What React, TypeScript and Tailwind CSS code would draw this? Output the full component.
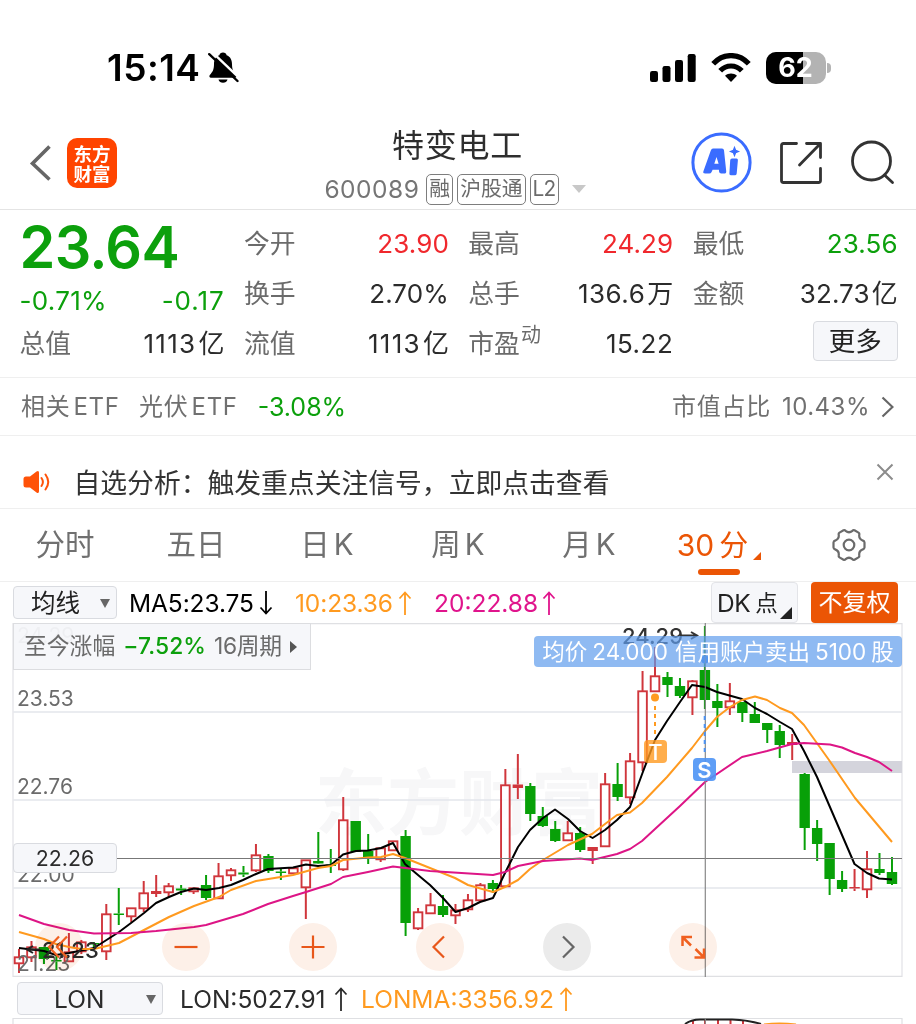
import type { ReactNode } from "react";

type Tone = "up" | "down" | "flat";

const TONE: Record<Tone, string> = {
  up: "text-[#f0282d]",
  down: "text-[#0ca00c]",
  flat: "text-[#2b2b2b]",
};

const RED = "#d0363c";
const GREEN = "#08a008";

// [kind, high, bodyTop, bodyBottom, low] in chart pixels
// r = hollow red, R = solid red, g = solid green
type Candle = ["r" | "R" | "g", number, number, number, number];

const CANDLES: Candle[] = [
  ["r", 949, 957, 963, 973], ["r", 941, 947, 957, 962], ["g", 947, 947, 959, 964], ["g", 955, 960, 961.5, 970],
  ["r", 933, 952, 961, 962], ["r", 940, 942, 951, 954], ["g", 942, 943, 944.5, 947], ["r", 904, 914, 951, 960],
  ["g", 888, 913.5, 915, 925], ["r", 908, 908, 916, 922], ["r", 881, 893, 908, 912], ["R", 875, 891, 894, 897],
  ["r", 883, 886, 892, 897], ["g", 885, 888.5, 890.5, 895], ["r", 888, 888, 891, 894], ["g", 875, 885, 898, 900],
  ["r", 863, 876, 898, 898], ["r", 868, 870, 875, 881], ["g", 866, 872.5, 874.5, 877], ["r", 844, 855, 870, 872],
  ["g", 854, 856, 871, 873], ["g", 868, 871.5, 873, 880], ["r", 868, 868, 873, 873], ["r", 860, 860, 887, 919],
  ["g", 832, 861, 863.5, 864], ["g", 849, 864.5, 866, 873], ["r", 797, 820, 869, 871], ["g", 821, 821, 852, 852],
  ["g", 834, 851, 857, 864], ["r", 848, 848, 859, 862], ["r", 841, 841, 850, 850], ["g", 830, 836, 923, 936],
  ["r", 908, 912, 928, 930], ["r", 893, 905, 913, 913], ["g", 895, 906, 915, 917], ["r", 904, 910, 915, 924],
  ["r", 894, 900, 909, 912], ["r", 883, 885, 900, 900], ["g", 880, 883, 889, 893], ["r", 769, 785, 886, 886],
  ["R", 754, 784.5, 788, 799], ["g", 783, 786, 814, 821], ["g", 807, 816, 826, 827], ["g", 821, 829, 841, 842],
  ["r", 821, 833, 840, 840], ["g", 827, 833, 850, 852], ["R", 847, 847, 851, 864], ["r", 773, 784, 846, 846],
  ["g", 763, 784, 797, 801], ["r", 753, 761, 797, 804], ["r", 671, 691, 762, 771], ["r", 647, 676, 691, 691],
  ["g", 672, 677, 685, 697], ["g", 678, 686, 696, 698], ["r", 680, 681, 697, 715], ["g", 626, 670, 700, 709],
  ["g", 684, 701, 708, 727], ["r", 683, 701, 707, 715], ["g", 702, 702, 713, 722], ["g", 702, 714, 723, 723],
  ["g", 723, 723, 730, 743], ["g", 725, 731, 745, 758], ["R", 734, 742, 745, 760], ["g", 773, 774, 828, 850],
  ["g", 820, 828, 844, 861], ["g", 843, 843, 879, 895], ["g", 871, 880, 889, 892], ["R", 869, 887, 888.5, 891],
  ["r", 851, 869, 889, 898], ["g", 853, 869, 873, 875], ["g", 857, 872, 884, 885],
];

const MA5 =
  "19,948 44,951 56,955 69,953 94,948 119,932 131,923 144,913 156,903 169,897 181,892 194,888.5 206,890 219,888 231,885 243,880 256,874 268,869 293,867.5 306,864.5 318,866 331,865 343,854.5 356,851 368,850.5 381,848 393,843 405,864 418,875 430,885 443,898 455.5,912 468,908 480,902 493,898 505,873 518,847 530,830 543,818 555,809.5 568,819 580,831 592.6,838 605,830 617,820 630,807 642.5,773 655,740 667,721 680,702 692,685 705,687 717,692 742,699 755,708 767,714 780,722 792,729 804,751 817,777 829.5,806 842,835 854.5,864 867,873 879,878.5 892,879.5";
const MA10 =
  "19,932 44,939 56,944 69,947 81,949 94,949 119,943 144,930 169,917 194,906 219,897 231,890 256,881 293,875 318,868 331,866 343,860 368,857.5 381,857 393,854 405,858 430,868 455,878 468,885 493,892 505,887 518,880 530,869 543,860 568,845 592,834 605,824 617,815 630,812.5 642,803 667,777 692,748 705,731 717,717 730,707 742,700 755,696.5 767,700 780,708 792,713 804,725 829,760 855,798 892,842";
const MA20 =
  "19,915 44,924 69,930 94,933.5 131,933 156,931 194,927 206,925 243,914 268,904 293,896 306,892 331,884 343,877 368,872 393,866.5 430,871 493,875 505,872 518,866 543,861 580,858.5 592,860 617,854 630,849 642,841 655,829 680,806 705,782 742,757 767,751 792,744 804,743 830,744.5 842,747.5 855,753 867,757 879,762 892,771";

const SANS = "font-['Inter','Noto_Sans_CJK_SC',sans-serif]";

function StatusBar() {
  return (
    <div className="flex h-[108px] items-center justify-between pl-[107px] pr-[85px] pt-[27px]">
      <div className="flex items-center gap-[7px]">
        <span className="text-[37px] font-semibold leading-none tracking-[0.500px] text-black">15:14</span>
        <svg width="32" height="34" viewBox="0 0 32 34">
          <path
            d="M15 1.500c-2 0-3.300 1.100-3.600 2.700C7.500 5.600 6 9 6 13c0 6-1.500 8-4.200 11-.9 1.200-.4 2.800 1.200 2.800h24c1.600 0 2.100-1.600 1.200-2.800C25.500 21 24 19 24 13c0-4-1.500-7.400-5.400-8.800C18.300 2.600 17 1.500 15 1.500z"
            fill="#000"
          />
          <path d="M10.500 28.500h9c-.6 2.200-2.300 3.300-4.500 3.300s-3.900-1.100-4.500-3.300z" fill="#000" />
          <path d="M2.800-.2 33 28.500" stroke="#fff" strokeWidth="2.400" />
          <path d="M1.200 3.200 29.500 30" stroke="#000" strokeWidth="2.400" strokeLinecap="round" />
        </svg>
      </div>
      <div className="flex items-center">
        <svg width="46" height="30" viewBox="0 0 46 30" className="mr-[15px]">
          <rect x="0" y="18" width="8" height="11" rx="2.200" />
          <rect x="12.500" y="13" width="8" height="16" rx="2.200" />
          <rect x="25" y="7" width="8" height="22" rx="2.200" />
          <rect x="37.700" y="1" width="8" height="28" rx="2.200" />
        </svg>
        <svg width="40" height="30" viewBox="0 0 40 30" className="mr-[15px]">
          <path d="M2.200 10.800C12-.2 28-.2 37.800 10.800" fill="none" stroke="#000" strokeWidth="5.200" />
          <path d="M9.200 17.800c6-6.400 15.600-6.400 21.600 0" fill="none" stroke="#000" strokeWidth="5.200" />
          <path d="M20 29l-6-6.200c3.300-3.200 8.700-3.200 12 0z" fill="#000" />
        </svg>
        <div className="relative flex h-[32px] w-[60px] items-center justify-center overflow-hidden rounded-[10px] bg-[#b3b3b3]">
          <div className="absolute inset-y-0 left-0 w-[37px] bg-black" />
          <span className="relative text-[27px] font-bold leading-none text-white">62</span>
        </div>
        <div className="ml-[1.500px] h-[10px] w-[4px] rounded-r-full bg-[#b3b3b3]" />
      </div>
    </div>
  );
}

function Badge({ children }: { children: ReactNode }) {
  return (
    <span className="flex h-[31px] items-center rounded-[5px] border-[1.500px] border-[#7d7d7d] px-[2px] text-[20.800px] leading-none text-[#6b6b6b]">
      {children}
    </span>
  );
}

function Header() {
  return (
    <header className="flex h-[102px] justify-between border-b border-[#e4e4e4] pl-[29px] pr-[21px]">
      <div className="flex h-[109px] w-[196px] items-center">
        <svg width="24" height="38" viewBox="0 0 24 38" className="mr-[14px]">
          <path d="M20.500 2.500 3.500 19.500l17 16" fill="none" stroke="#666" strokeWidth="3.600" />
        </svg>
        <div className="flex h-[50px] w-[50px] flex-col items-center justify-center rounded-[10px] bg-[#ff4400] font-['Noto_Sans_CJK_SC',sans-serif] text-[18.500px] font-bold leading-[20px] text-white">
          <span>东方</span>
          <span>财富</span>
        </div>
      </div>
      <div className="flex flex-col items-center">
        <h1 className="mt-[15px] pr-[1px] text-[32px] leading-[46px] tracking-[0.700px] text-[#2e2e2e]">特变电工</h1>
        <div className="-ml-[6px] flex items-center gap-[4px]">
          <span className="mr-[3px] text-[24.500px] leading-[40px] tracking-[0.500px] text-[#757575]">600089</span>
          <Badge>融</Badge>
          <Badge>沪股通</Badge>
          <Badge>
            <span className="tracking-[-0.700px]">L2</span>
          </Badge>
          <svg width="14" height="8" viewBox="0 0 14 8" className="ml-[9px]">
            <path d="M0 0h14L7 8z" fill="#c8c8c8" />
          </svg>
        </div>
      </div>
      <div className="flex h-[109px] items-center gap-[27px]">
        <svg width="61" height="61" viewBox="0 0 61 61">
          <circle cx="30.500" cy="30.500" r="28.600" fill="none" stroke="#3a6cff" strokeWidth="3" />
          <path
            d="M22.500 16.500h8.500q1.700 0 2 1.700L35.200 39q.3 2.600-2.200 2.600h-2.800q-1.900 0-2.100-1.800l-.2-2.100h-6.300l-1 2.300q-.7 1.600-2.400 1.600h-4q-2.700 0-1.700-2.500l7.300-20.700q.7-1.900 2.200-1.900zm3 8.500-2.200 6.800h4.300z"
            fill="#3a6cff"
          />
          <path d="M41 26.500h4.500q1.600 0 1.400 1.700L45.700 41.400q-.2 1.900-2 1.900h-3.900q-1.600 0-1.400-1.800l.8-13.300q.2-1.700 1.800-1.700z" fill="#3a6cff" />
          <path d="M43.500 15.500l1.100 2.800 2.900 1.200-2.900 1.200-1.100 2.800-1.100-2.800-2.900-1.200 2.900-1.200z" fill="#3a6cff" stroke="#3a6cff" strokeWidth="1.200" />
        </svg>
        <svg width="44" height="44" viewBox="0 0 44 44" fill="none" stroke="#333" strokeWidth="2.800" strokeLinejoin="round">
          <path d="M17.500 2.500H4.500q-2 0-2 2v35q0 2 2 2h35q2 0 2-2V27.500" strokeLinecap="round" />
          <path d="M27.500 2.500h14v14M41 3 20.500 24" strokeLinecap="round" />
        </svg>
        <svg width="45" height="45" viewBox="0 0 45 45" fill="none" stroke="#333" strokeWidth="2.800" strokeLinecap="round">
          <circle cx="21.500" cy="21" r="19" />
          <path d="m34.500 35 8 7.500" />
        </svg>
      </div>
    </header>
  );
}

function Stat({ label, sup, value, tone = "flat" }: { label: string; sup?: string; value: string; tone?: Tone }) {
  const unit = /[亿万]$/.test(value) ? value.slice(-1) : "";
  const num = unit ? value.slice(0, -1) : value;
  // Inter's "1" is narrow, open those numbers up a little
  const spacing = num === "1113" ? "tracking-[1.300px]" : num.startsWith("1") ? "tracking-[0.500px]" : "tracking-[0.100px]";
  return (
    <div className="flex h-[50px] items-center justify-between text-[26px] leading-none">
      <span className="flex text-[25.800px] text-[#6b6b6b]">
        {label}
        {sup && <span className="-mt-[6px] ml-[1px] text-[20px]">{sup}</span>}
      </span>
      <span className={`flex items-center gap-[2px] ${TONE[tone]}`}>
        <span className={spacing}>{num}</span>
        {unit && <span className="text-[26px]">{unit}</span>}
      </span>
    </div>
  );
}

function Quote() {
  return (
    <section className="grid h-[168px] grid-cols-[205px_205px_205px_205px] gap-x-[19.400px] border-b border-[#efefef] pl-[19.500px] pt-[9px]">
      <div>
        <div className="flex h-[57px] items-center text-[57.500px] font-semibold leading-none tracking-[-0.700px] text-[#0ca00c]">23.64</div>
        <div className="flex h-[50px] items-center justify-between text-[26px] leading-none tracking-[0.300px] text-[#0ca00c]">
          <span>-0.71%</span>
          <span className="tracking-[0.900px]">-0.17</span>
        </div>
        <div className="-mt-[7px]">
          <Stat label="总值" value="1113亿" />
        </div>
      </div>
      <div>
        <Stat label="今开" value="23.90" tone="up" />
        <Stat label="换手" value="2.70%" />
        <Stat label="流值" value="1113亿" />
      </div>
      <div>
        <Stat label="最高" value="24.29" tone="up" />
        <Stat label="总手" value="136.6万" />
        <Stat label="市盈" sup="动" value="15.22" />
      </div>
      <div>
        <Stat label="最低" value="23.56" tone="down" />
        <Stat label="金额" value="32.73亿" />
        <div className="flex justify-end pt-[2px]">
          <button className="flex h-[40px] w-[85px] items-center justify-center rounded-[4px] border border-[#d9dbe0] bg-[#f6f7fa] text-[26.500px] leading-none text-[#222]">
            更多
          </button>
        </div>
      </div>
    </section>
  );
}

function EtfRow() {
  return (
    <section className="flex h-[58px] items-center justify-between border-b border-[#efefef] pl-[21px] pr-[22px] pt-[1px] text-[24px] leading-none tracking-[0.700px] text-[#707070]">
      <div className="flex items-center">
        <span>相关</span>
        <span className="ml-[3px]">ETF</span>
        <span className="ml-[19.500px]">光伏</span>
        <span className="ml-[3px]">ETF</span>
        <span className="ml-[20px] text-[25px] tracking-[0] text-[#0ca00c]">-3.08%</span>
      </div>
      <div className="flex items-center">
        <span>市值占比</span>
        <span className="ml-[11px] tracking-[0.500px]">10.43%</span>
        <svg width="13" height="22" viewBox="0 0 13 22" className="ml-[11px]">
          <path d="M1.500 1.500 11.500 11l-10 9.500" fill="none" stroke="#666" strokeWidth="2.200" />
        </svg>
      </div>
    </section>
  );
}

function Notice() {
  return (
    <section className="flex h-[73px] items-center border-b border-[#efefef] pl-[23px] pr-[22px]">
      <svg width="28" height="24" viewBox="0 0 28 24" className="mt-[20px]">
        <path d="M3 6.500h4L13.500 1.500q2.500-1.500 2.500 1.300v18.400q0 2.800-2.500 1.300L7 17.500H3q-2.500 0-2.500-2.500V9Q.5 6.500 3 6.500z" fill="#ff5208" />
        <path d="M18.500 8q2.800 4 0 8M22.500 4.500q5.500 7.500 0 15" fill="none" stroke="#ff5208" strokeWidth="2" strokeLinecap="round" />
      </svg>
      <p className="ml-[22.500px] mt-[23px] text-[26.800px] leading-none text-[#333]">自选分析：触发重点关注信号，立即点击查看</p>
      <svg width="18" height="18" viewBox="0 0 18 18" className="ml-auto">
        <path d="m1.500 1.500 15 15m0-15-15 15" stroke="#8c8c8c" strokeWidth="2" />
      </svg>
    </section>
  );
}

const TABS = [
  ["分时", ""],
  ["五日", ""],
  ["日", "K"],
  ["周", "K"],
  ["月", "K"],
];

function Tabs() {
  return (
    <nav className="flex h-[73px] border-b border-[#efefef] text-[29.500px] leading-none text-[#707070]">
      {TABS.map(([cn, latin]) => (
        <button key={cn} className="flex w-[131px] items-center justify-center gap-[4px] pr-[1px]">
          <span>{cn}</span>
          {latin && <span>{latin}</span>}
        </button>
      ))}
      <button className="relative flex w-[128px] items-center justify-center gap-[5px] text-[#eb5505]">
        <span className="text-[30px]">30</span>
        <span className="text-[29px]">分</span>
        <svg width="8" height="8" viewBox="0 0 8 8" className="mt-[22px]">
          <path d="M8 0v8H0z" fill="#eb5505" />
        </svg>
        <span className="absolute bottom-[6px] left-[43px] h-[6px] w-[42px] rounded-full bg-[#eb5505]" />
      </button>
      <button className="flex w-[132px] items-center justify-center">
        <svg width="34" height="32" viewBox="0 0 34 32" fill="none" stroke="#6b6b6b" strokeWidth="2.200">
          <path
            d="M11.500 1.300q1.200-.5 2.100.5 3.400 2.900 6.800 0 .9-1 2.100-.5l4 2.300q1.100.8.800 2-.7 4.500 3.600 6 1.500.5 1.600 1.900v5q-.1 1.400-1.600 1.900-4.300 1.500-3.600 6 .3 1.200-.8 2l-4 2.300q-1.200.5-2.100-.5-3.400-2.900-6.800 0-.9 1-2.100.5l-4-2.300q-1.100-.8-.8-2 .7-4.500-3.600-6-1.500-.5-1.600-1.900v-5q.1-1.400 1.600-1.900 4.300-1.500 3.600-6-.3-1.200.8-2z"
            strokeLinejoin="round"
          />
          <circle cx="17" cy="16" r="5.300" />
        </svg>
      </button>
    </nav>
  );
}

function Arrow({ down, color }: { down?: boolean; color: string }) {
  return (
    <svg width="14" height="26" viewBox="0 0 14 26" className={down ? "rotate-180" : ""}>
      <path d="M7 25V2.500M1.500 8.500 7 2.500l5.500 6" fill="none" stroke={color} strokeWidth="1.800" />
    </svg>
  );
}

function Caret() {
  return (
    <svg width="10" height="9" viewBox="0 0 10 9">
      <path d="M0 0h10L5 9z" fill="#666" />
    </svg>
  );
}

function MaRow() {
  return (
    <div className="flex h-[41px] items-center pl-[13px] pr-[18px] text-[24.500px] leading-none">
      <button className="flex h-[33px] w-[104px] items-center justify-between rounded-[4px] border border-[#d9dbe0] bg-[#f6f7fa] pl-[17px] pr-[6px] pt-[1px] text-[#222]">
        <span>均线</span>
        <Caret />
      </button>
      <div className="ml-[12px] flex w-[144px] items-center justify-between pt-[1px] text-black">
        <span className="tracking-[-0.100px]">MA5:23.75</span>
        <Arrow down color="#000" />
      </div>
      <div className="ml-[22px] flex w-[117px] items-center justify-between pt-[1px] text-[#ff9a1f]">
        <span className="tracking-[-0.100px]">10:23.36</span>
        <Arrow color="#ff9a1f" />
      </div>
      <div className="ml-[22px] flex w-[122px] items-center justify-between pt-[1px] text-[#e0148c]">
        <span>20:22.88</span>
        <Arrow color="#e0148c" />
      </div>
      <button className="relative ml-auto flex h-[41px] w-[87px] items-center gap-[5px] rounded-[4px] border border-[#e3e4e8] bg-[#f6f7fa] pl-[5px] pt-[1px] text-[#222]">
        <span className="tracking-[-0.500px]">DK</span>
        <span className="text-[22.500px]">点</span>
        <svg width="12" height="12" viewBox="0 0 12 12" className="absolute bottom-[3px] right-[5px]">
          <path d="M12 0v12H0z" fill="#222" />
        </svg>
      </button>
      <button className="ml-[13px] flex h-[41px] w-[87px] items-center justify-center rounded-[4px] bg-[#eb5505] pt-[1px] text-[24px] text-white">不复权</button>
    </div>
  );
}

function RoundButton({ className, disc, children }: { className: string; disc: string; children: ReactNode }) {
  return (
    <button className={`absolute top-[300px] flex h-[48px] w-[48px] items-center justify-center ${className}`}>
      <span className={`absolute inset-0 rounded-full mix-blend-multiply ${disc}`} />
      <svg width="30" height="30" viewBox="0 0 30 30" fill="none" stroke="currentColor" strokeWidth="2.200" className="relative">
        {children}
      </svg>
    </button>
  );
}

const PEACH = "bg-[#fdf0e8]";

function KLineChart() {
  return (
    <div className="relative h-[354px]">
      <svg width="916" height="354" viewBox="0 623 916 354" className={`block ${SANS}`}>
        <text x="315" y="829" fontSize="72" fontWeight="700" fill="#f7f7f8" className="font-['Noto_Sans_CJK_SC',sans-serif]">
          东方财富
        </text>
        <g stroke="#e3e6ec" strokeWidth="1.500">
          <path d="M13 712h889M13 800h889M13 888h889" />
          <path d="M13 623v354M902 623v354" stroke="#e8e8ec" />
          <path d="M13 623.500h889M13 976.500h889" stroke="#dfe0e3" />
        </g>
        <rect x="792" y="761" width="110" height="12" fill="#d4d4dc" />
        {CANDLES.map(([kind, high, top, bottom, low], i) => {
          const x = 19 + i * 12.471;
          const color = kind === "g" ? GREEN : RED;
          return (
            <g key={i}>
              {high < top && <path d={`M${x} ${high}V${top}`} stroke={color} strokeWidth="2" />}
              {low > bottom && <path d={`M${x} ${bottom}V${low}`} stroke={color} strokeWidth="2" />}
              {kind === "r" ? (
                <rect x={x - 4.3} y={top + 0.3} width="8.600" height={bottom - top} fill="#fff" fillOpacity="0.850" stroke={color} strokeWidth="1.900" />
              ) : (
                <rect x={x - 5.2} y={top} width="10.400" height={Math.max(bottom - top, 1.5)} fill={color} />
              )}
            </g>
          );
        })}
        <g fill="none" strokeWidth="2" strokeLinejoin="round">
          <polyline points={MA5} stroke="#000" />
          <polyline points={MA10} stroke="#ff9a1f" />
          <polyline points={MA20} stroke="#dd1586" />
        </g>
        <g fontSize="21" fill="#6b6b6b">
          <text x="17" y="643">24.29</text>
          <text x="17" y="705.500">23.53</text>
          <text x="17" y="794">22.76</text>
          <text x="17" y="882">22.00</text>
          <text x="17" y="970.500">21.23</text>
        </g>
        <text x="42" y="957.500" fontSize="22" fontWeight="500" fill="#2b2b2b">21.23</text>
        <path d="M40 949.500H27m6-3.500-6 3.500 6 3.500" fill="none" stroke="#222" strokeWidth="2" />
        <text x="622" y="643.500" fontSize="22" fontWeight="500" fill="#333">24.29</text>
        <path d="M680 635.500h17m-6-3.500 6 3.500-6 3.500" fill="none" stroke="#333" strokeWidth="2" />
        <circle cx="705" cy="659.500" r="4" fill="#3e8bf2" />
        <path d="M13 858.500h889" stroke="#777" strokeWidth="1.200" />
        <path d="M655 706v31" stroke="#ff9a1f" strokeWidth="2" strokeDasharray="4 4" />
        <circle cx="655" cy="697.500" r="4" fill="#ff9a1f" />
        <path d="M705.300 623v354" stroke="#888" strokeWidth="1.200" />
        <path d="M704.700 716v40" stroke="#4d94f5" strokeWidth="2" strokeDasharray="4 4" />
      </svg>

      {/* trade markers */}
      <span className="absolute left-[644px] top-[117px] flex h-[23px] w-[23px] items-center justify-center rounded-[4px] bg-[#ff9a1f]/80 text-[22px] font-medium leading-none text-white">T</span>
      <span className="absolute left-[693px] top-[135px] flex h-[23px] w-[23px] items-center justify-center rounded-[4px] bg-[#4d94f5]/90 text-[22px] font-semibold leading-none text-white">S</span>

      <div className="absolute left-[13px] top-0 flex h-[47px] w-[298px] items-center border border-[#dcdde0] bg-[#f6f7fa]/95 pl-[10px] text-[22.800px] leading-none text-[#6b6b6b]">
        <span>至今涨幅</span>
        <span className="ml-[8px] font-medium tracking-[0.100px] text-[#0ca00c]">−7.52%</span>
        <span className="ml-[8px] tracking-[-0.300px]">16周期</span>
        <svg width="7" height="12" viewBox="0 0 7 12" className="ml-[8px]">
          <path d="M0 0v12l7-6z" fill="#555" />
        </svg>
      </div>

      <div className="absolute left-[534px] top-[13px] flex h-[31px] w-[368px] items-center justify-center gap-[5px] rounded-[4px] bg-[#5f9dec]/70 pt-[1px] text-[22.500px] leading-none text-white">
        <span>均价</span>
        <span className="mr-[2px]">24.000</span>
        <span>信用账户卖出</span>
        <span>5100</span>
        <span>股</span>
      </div>

      <div className="absolute left-[13px] top-[220px] flex h-[30px] w-[104px] items-center justify-center rounded-[4px] border border-[#d9dbe0] bg-[#f6f7fa] pt-[1px] text-[21.300px] leading-none text-[#2b2b2b]">
        22.26
      </div>

      <RoundButton className="left-[35px] text-[#f06020]" disc={PEACH}>
        <path d="M15 4.500 5 15l10 10.500M23 4.500 13 15l10 10.500" />
      </RoundButton>
      <RoundButton className="left-[162px] text-[#e8571a]" disc={PEACH}>
        <path d="M3.500 15h23" />
      </RoundButton>
      <RoundButton className="left-[289px] text-[#e8571a]" disc={PEACH}>
        <path d="M3.500 15h23M15 3.500v23" />
      </RoundButton>
      <RoundButton className="left-[416px] text-[#e8571a]" disc={PEACH}>
        <path d="M19 4.500 8.500 15 19 25.500" />
      </RoundButton>
      <RoundButton className="left-[543px] text-[#666]" disc="bg-[#ebebeb]">
        <path d="M11 4.500 21.500 15 11 25.500" />
      </RoundButton>
      <RoundButton className="left-[669px] text-[#f06020]" disc={PEACH}>
        <path d="M4.500 14V5h9.500M5 5.500l8 8M26 16.500v9h-9.500M25.500 25l-8-8" strokeWidth="2.500" />
      </RoundButton>
    </div>
  );
}

function LonRow() {
  return (
    <div className="flex h-[41px] items-center pl-[17px] pt-[2px] text-[24.500px] leading-none text-[#2b2b2b]">
      <button className="flex h-[33px] w-[146px] items-center justify-between rounded-[4px] border border-[#d9dbe0] bg-[#f6f7fa] pl-[36px] pr-[6px] pt-[1px]">
        <span>LON</span>
        <Caret />
      </button>
      <div className="ml-[17px] flex w-[168px] items-center justify-between pt-[1px]">
        <span>LON:5027.91</span>
        <Arrow color="#2b2b2b" />
      </div>
      <div className="ml-[13px] flex w-[212px] items-center justify-between pt-[1px] text-[#ff9a1f]">
        <span>LONMA:3356.92</span>
        <Arrow color="#ff9a1f" />
      </div>
    </div>
  );
}

function LonChart() {
  return (
    <svg width="916" height="6" viewBox="0 1018 916 6" className="block">
      <path d="M13 1018.500h889M13 1018v6M902 1018v6" stroke="#dfe0e3" strokeWidth="1.200" />
      <path d="M693 1020v4M705 1020v4M718 1020v4M730.500 1020v4M743 1021v3" stroke="#d0363c" strokeWidth="2" />
      <path d="M685 1024q6-4.500 15-4.500h32q16 .5 29 4.500" fill="none" stroke="#222" strokeWidth="2" />
      <path d="M764 1024.500q15-2 32 0" fill="none" stroke="#ff9a1f" strokeWidth="2" />
      <path d="M705.300 1018v6" stroke="#888" strokeWidth="1.200" />
    </svg>
  );
}

export default function App() {
  return (
    <div className={`h-[1024px] w-[916px] overflow-hidden bg-white ${SANS}`}>
      <StatusBar />
      <Header />
      <Quote />
      <EtfRow />
      <Notice />
      <Tabs />
      <MaRow />
      <KLineChart />
      <LonRow />
      <LonChart />
    </div>
  );
}
